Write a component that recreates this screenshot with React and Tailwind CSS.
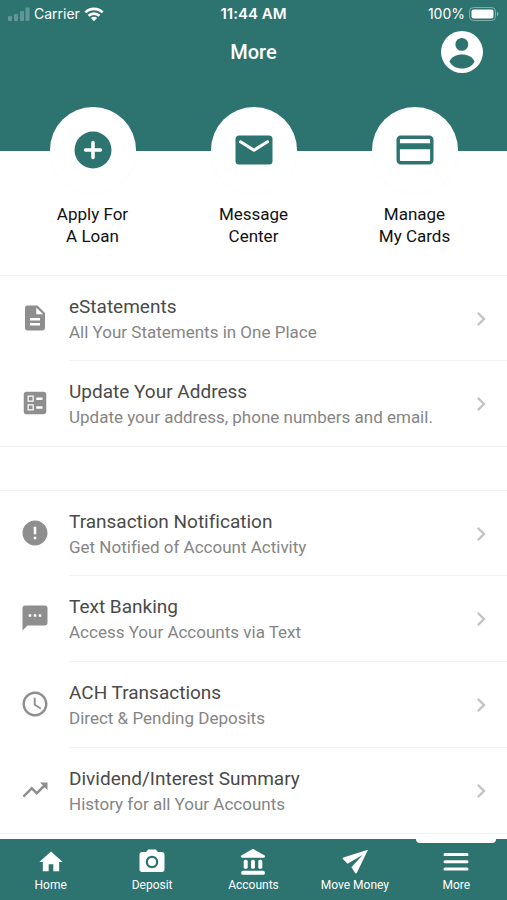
import {
    MdAccessTime,
    MdBallot,
    MdChevronRight,
    MdDescription,
    MdError,
    MdHome,
    MdPhotoCamera,
    MdTextsms,
    MdTrendingUp,
} from 'react-icons/md';

const SignalIcon = () => (
    <svg width="22" height="14" viewBox="0 0 22 14" fill="#fff" fillOpacity="0.25" aria-hidden="true">
        <rect x="0" y="9" width="4" height="5" rx="1" />
        <rect x="6" y="7" width="4" height="7" rx="1" />
        <rect x="12" y="4" width="4" height="10" rx="1" />
        <rect x="17.5" y="0.5" width="4" height="13.5" rx="1" />
    </svg>
);

const WifiIcon = () => (
    <svg width="20" height="15" viewBox="0 0 20 15" fill="none" stroke="#fff" strokeWidth="2.7" aria-hidden="true">
        <path d="M1.4 5.4a12.3 12.3 0 0 1 17.2 0" />
        <path d="M4.6 8.8a7.8 7.8 0 0 1 10.8 0" />
        <path d="M10 14.2 6.9 11.1a4.5 4.5 0 0 1 6.2 0Z" fill="#fff" stroke="none" />
    </svg>
);

const BatteryIcon = () => (
    <svg width="30" height="14" viewBox="0 0 30 14" aria-hidden="true">
        <rect x="0.5" y="0.5" width="26" height="13" rx="4" fill="none" stroke="#fff" strokeOpacity="0.4" />
        <rect x="2.5" y="2.5" width="22" height="9" rx="2" fill="#fff" />
        <path d="M28 4.6c1.8.7 1.8 4.1 0 4.8Z" fill="#fff" fillOpacity="0.45" />
    </svg>
);

const AccountIcon = () => (
    <svg width="42" height="42" viewBox="0 0 42 42" aria-hidden="true">
        <circle cx="21" cy="21" r="21" fill="#fff" />
        <circle cx="20.8" cy="13.4" r="6.4" fill="#2d7470" />
        <path d="M8.4 30.4C10.4 26 15.4 23.4 21 23.4s10.6 2.6 12.6 7C31.4 35 26.500 37.400 21 37.400S10.600 35 8.400 30.400Z" fill="#2d7470" />
    </svg>
);

const PlusCircleIcon = () => (
    <svg width="38" height="38" viewBox="0 0 38 38" aria-hidden="true">
        <circle cx="19" cy="19" r="18.5" fill="#2d7470" />
        <path d="M19 11.5v15M11.5 19h15" stroke="#fff" strokeWidth="3.5" strokeLinecap="round" />
    </svg>
);

const MailIcon = () => (
    <svg width="38" height="30" viewBox="0 0 38 30" aria-hidden="true">
        <rect x="0.5" y="0.5" width="37" height="29" rx="3.5" fill="#2d7470" />
        <path d="M5.500 6.800 19 15.200 32.500 6.800" fill="none" stroke="#fff" strokeWidth="3.100" strokeLinecap="round" strokeLinejoin="round" />
    </svg>
);

const CardIcon = () => (
    <svg width="38" height="30" viewBox="0 0 38 30" aria-hidden="true">
        <rect x="2.2" y="2.2" width="33.6" height="25.6" rx="2.5" fill="none" stroke="#2d7470" strokeWidth="3.4" />
        <path d="M2 11.2h34" stroke="#2d7470" strokeWidth="6" />
    </svg>
);

const BankIcon = () => (
    <svg width="26" height="26" viewBox="0 0 26 26" fill="#fff" aria-hidden="true">
        <path d="M12.200.3a1.800 1.800 0 0 1 1.600 0l10.500 5.900c1.200.8.900 2.500-.4 2.500H2.100C.8 8.700.5 7 1.700 6.200Z" />
        <rect x="3.700" y="10.800" width="4" height="9" rx="1.600" />
        <rect x="11" y="10.800" width="4" height="9" rx="1.600" />
        <rect x="18.300" y="10.800" width="4" height="9" rx="1.600" />
        <rect x="1.200" y="21.800" width="23.600" height="4" rx="1.600" />
    </svg>
);

const PlaneIcon = () => (
    <svg width="26" height="26" viewBox="0 0 26 26" fill="#fff" aria-hidden="true">
        <path d="M26 .8 1.300 8.400c-.7.300-.9 1-.4 1.500l4.600 4.900L20.600 6 9.400 18.300l3.600 5.500c.5.800 1.400.8 1.900 0Z" />
    </svg>
);

const MenuIcon = () => (
    <svg width="26" height="26" viewBox="0 0 26 26" stroke="#fff" strokeWidth="3" strokeLinecap="round" aria-hidden="true">
        <path d="M2 5.500h22M2 12.800h22M2 20h22" />
    </svg>
);

const shortcuts = [
    { lines: ['Apply For', 'A Loan'], icon: PlusCircleIcon },
    { lines: ['Message', 'Center'], icon: MailIcon },
    { lines: ['Manage', 'My Cards'], icon: CardIcon },
];

const documentItems = [
    { title: 'eStatements', text: 'All Your Statements in One Place', icon: MdDescription },
    { title: 'Update Your Address', text: 'Update your address, phone numbers and email.', icon: MdBallot },
];

const accountItems = [
    { title: 'Transaction Notification', text: 'Get Notified of Account Activity', icon: MdError },
    { title: 'Text Banking', text: 'Access Your Accounts via Text', icon: MdTextsms },
    { title: 'ACH Transactions', text: 'Direct & Pending Deposits', icon: MdAccessTime },
    { title: 'Dividend/Interest Summary', text: 'History for all Your Accounts', icon: MdTrendingUp },
];

const tabs = [
    { label: 'Home', icon: MdHome, size: 28 },
    { label: 'Deposit', icon: MdPhotoCamera, size: 30 },
    { label: 'Accounts', icon: BankIcon },
    { label: 'Move Money', icon: PlaneIcon },
    { label: 'More', icon: MenuIcon, active: true },
];

const MenuList = ({ items }) => (
    <ul className="border-y border-[#f3f3f3]">
        {items.map(({ title, text, icon: Icon }, index) => (
            <li key={title}>
                <a href="#" className="flex items-stretch">
                    <span className="flex w-[69px] shrink-0 items-center pl-5">
                        <Icon size={30} color="#8e8e8e" />
                    </span>
                    <span className={`flex flex-1 items-center justify-between pr-3 pt-[17px] ${index > 0 ? 'border-t border-[#f3f3f3] pb-4' : 'pb-[15px]'}`}>
                        <span>
                            <span className="block text-[19px] leading-[27px] text-[#4a4a4a]">{title}</span>
                            <span className="block text-[17px] leading-[25px] text-[#858585]">{text}</span>
                        </span>
                        <MdChevronRight size={28} color="#c4c4c4" className="shrink-0" />
                    </span>
                </a>
            </li>
        ))}
    </ul>
);

const App = () => {
    return (
        <div className="flex min-h-screen flex-col bg-white font-[Roboto,sans-serif] [font-variant-ligatures:none]">
            <header className="h-[151px] bg-[#2d7470] text-white">
                <div className="grid grid-cols-3 items-center px-2 pt-1 font-[Inter,sans-serif] text-sm leading-5">
                    <div className="flex items-center gap-1">
                        <SignalIcon />
                        <span>Carrier</span>
                        <WifiIcon />
                    </div>
                    <span className="text-center text-[15px] font-semibold leading-5">11:44 AM</span>
                    <div className="flex items-center justify-end gap-1">
                        <span>100%</span>
                        <BatteryIcon />
                    </div>
                </div>
                <div className="grid grid-cols-3 items-center px-6 pt-[7px]">
                    <h1 className="col-start-2 text-center text-xl font-medium">More</h1>
                    <button type="button" aria-label="Profile" className="justify-self-end">
                        <AccountIcon />
                    </button>
                </div>
            </header>

            <main className="flex-1">
                <nav aria-label="Shortcuts" className="-mt-11 grid grid-cols-3 px-3 pb-7">
                    {shortcuts.map(({ lines, icon: Icon }) => (
                        <a key={lines[0]} href="#" className="flex flex-col items-center gap-[10px]">
                            <span className="flex size-[86px] items-center justify-center rounded-full bg-white shadow-[0_1px_4px_rgba(0,0,0,0.02)]">
                                <Icon />
                            </span>
                            <span className="text-center text-[17px] leading-[22px] text-[#111]">
                                {lines[0]}
                                <br />
                                {lines[1]}
                            </span>
                        </a>
                    ))}
                </nav>

                <MenuList items={documentItems} />
                <div className="h-[43px]" />
                <MenuList items={accountItems} />
            </main>

            <nav aria-label="Main" className="sticky bottom-0 grid grid-cols-5 bg-[#2d7470] text-white">
                {tabs.map(({ label, icon: Icon, size, active }) => (
                    <a key={label} href="#" className="relative flex flex-col items-center pt-[9px] pb-[6px]">
                        {active && <span className="absolute top-0 h-1 w-20 rounded-b-sm bg-white" />}
                        <span className="flex h-7 items-center">
                            <Icon size={size} />
                        </span>
                        <span className="text-xs leading-[18px]">{label}</span>
                    </a>
                ))}
            </nav>
        </div>
    );
};

export default App;
